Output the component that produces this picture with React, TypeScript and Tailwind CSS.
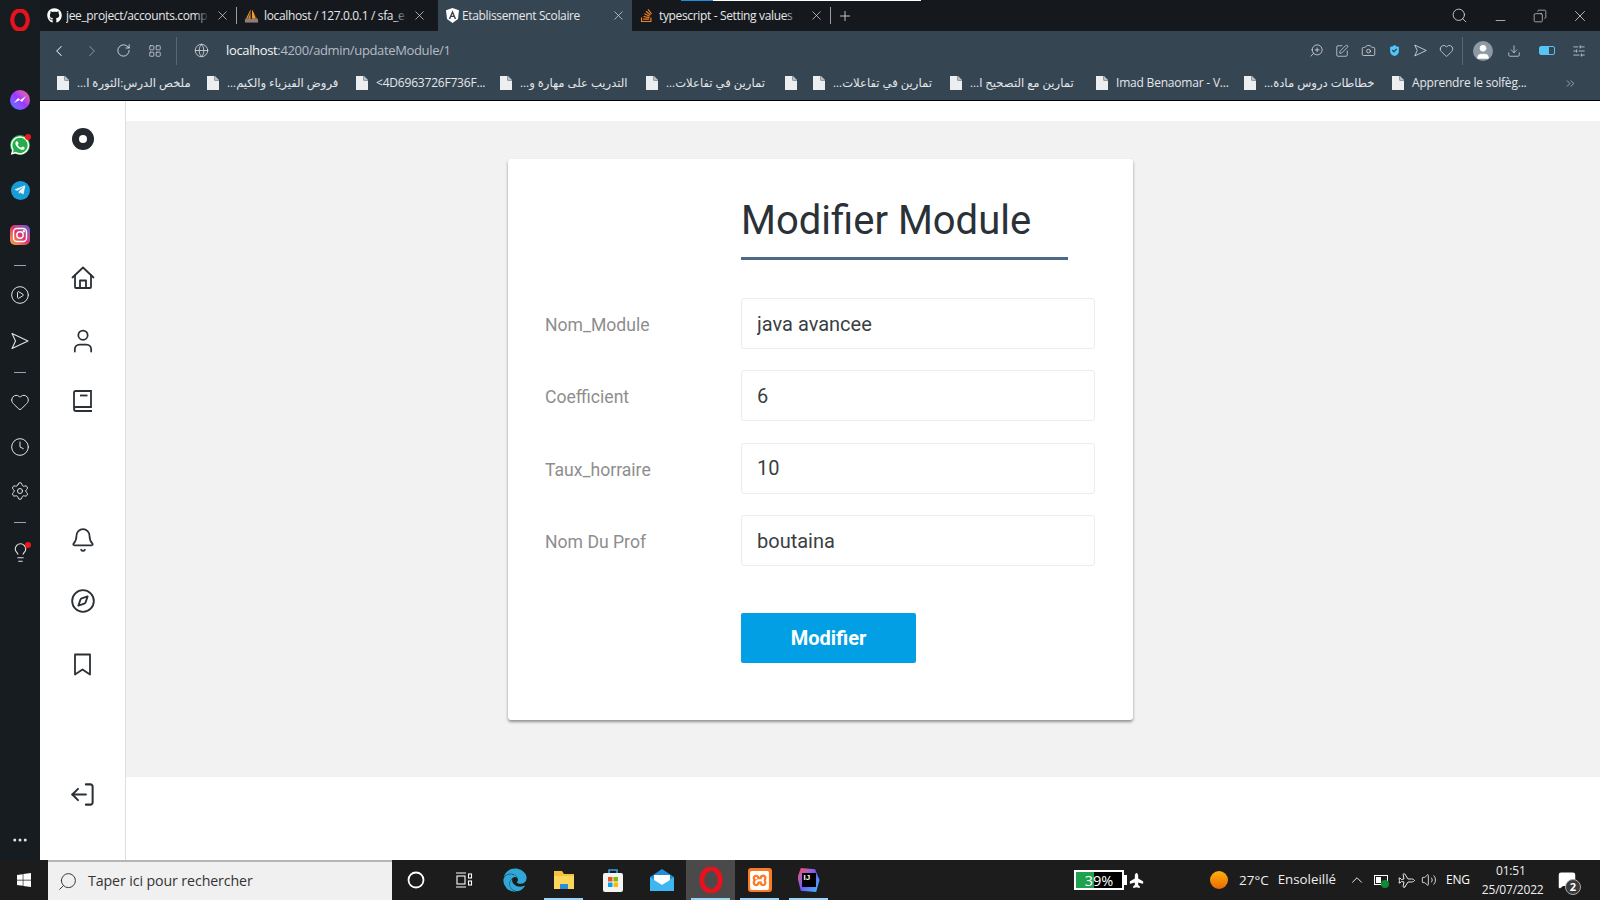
import React from "react";
import { ChevronLeft, ChevronRight, RotateCw, LayoutGrid, Globe, ZoomIn, SquarePen, Camera, Heart, Download, SlidersHorizontal, Search, Minus, X, Plus, ChevronsRight, Copy, CirclePlay, Clock, Settings, Lightbulb, Ellipsis, User, Bell, Compass, LogOut, ChevronUp, Plane, Volume2, MessageSquare, ShieldCheck, Circle } from "lucide-react";
import { FaGithub, FaStackOverflow, FaWhatsapp, FaTelegramPlane, FaWindows, FaPlane, FaEdge } from "react-icons/fa";
import { SiXampp } from "react-icons/si";

const ui = "font-['Open_Sans','Noto_Sans','DejaVu_Sans',sans-serif]";

function Tab({ w, icon, text, textW, active, sep, ml, mr }: { w: string; icon: React.ReactNode; text: string; textW: string; active?: boolean; sep?: boolean; ml: string; mr: string }) {
  return (
    <div className={`${w} h-full flex items-center pl-[7px] shrink-0 relative ${active ? "bg-[#364552]" : ""}`}>
      <span className="w-[15px] flex justify-center shrink-0">{icon}</span>
      <span className={`${textW} ${ml} overflow-hidden whitespace-nowrap text-[12px] tracking-[-0.35px] text-[#e6e8ea] relative`}>
        {text}
        {!active && <span className="absolute right-0 top-0 bottom-0 w-[14px] bg-gradient-to-r from-transparent to-[#15191d]" />}
      </span>
      <X size={15} strokeWidth={1.1} className={`ml-auto ${mr} text-[#e2e5e7]`} />
      {sep && <span className="absolute right-0 top-[7px] h-[17px] w-px bg-[#9aa0a5]" />}
    </div>
  );
}

function Bm({ w, text, rtl }: { w: string; text?: string; rtl?: boolean }) {
  return (
    <div className={`${w} shrink-0 flex items-center h-full`}>
      <svg width="12" height="14" viewBox="0 0 12 14" className="shrink-0"><path d="M0 0h7.5L12 4.5V14H0z" fill="#eceef0" /><path d="M7.5 0v4.5H12z" fill="#364552" /><path d="M8 0l4 4H8z" fill="#b9bfc5" /></svg>
      {text && <span dir={rtl ? "rtl" : "ltr"} className={`ml-[8px] whitespace-nowrap text-[#e4e7ea] ${rtl ? "text-[11.6px]" : "text-[12px] tracking-[-0.2px]"}`}>{text}</span>}
    </div>
  );
}

function SideItem({ children, h }: { children: React.ReactNode; h: string }) {
  return <div className={`${h} w-full flex items-center justify-center shrink-0 relative`}>{children}</div>;
}
const Dash = () => <div className="w-[12px] h-px bg-[#9aa4ab]" />;
const Dot = () => <span className="absolute left-[25px] top-[11px] w-[6px] h-[6px] rounded-full bg-[#f01818]" />;

function OperaLogo({ s }: { s: number }) {
  return (
    <svg width={s} height={s} viewBox="0 0 24 24">
      <ellipse cx="12" cy="12" rx="8.5" ry="10.5" fill="none" stroke="#e8121f" strokeWidth="4.6" />
    </svg>
  );
}

function SendOutline({ s, c }: { s: number; c?: string }) {
  return (
    <svg width={s} height={s} viewBox="0 0 18 18" fill="none" stroke="currentColor" strokeWidth="1.1" strokeLinejoin="round" className={c}>
      <path d="M1 1.5L17 9 1 16.5 4.5 9z" />
    </svg>
  );
}

function Field({ label, value }: { label: string; value: string }) {
  return (
    <div className="flex items-center h-[51px] mb-[21.4px]">
      <label className="w-[196px] text-[17.6px] text-[#8e8e8e] pt-[3px]">{label}</label>
      <input readOnly value={value} className="w-[354px] h-full px-[15px] border border-[#ececec] rounded-[3px] bg-white text-[20px] text-[#3a3f44] outline-none font-['Roboto',sans-serif]" />
    </div>
  );
}

function Nav({ h, children }: { h: string; children: React.ReactNode }) {
  return <div className={`${h} flex items-center justify-center shrink-0 text-[#2b3036]`}>{children}</div>;
}

export default function App() {
  return (
    <div className={`w-[1600px] h-[900px] flex flex-col overflow-hidden bg-white ${ui}`}>
      <div className="flex h-[860px]">
        {/* Opera sidebar */}
        <aside className="w-[40px] bg-[#171c20] flex flex-col items-center shrink-0 text-[#dfe3e6]">
          <SideItem h="h-[40px]"><OperaLogo s={22} /></SideItem>
          <div className="h-[37px] shrink-0" />
          <SideItem h="h-[46px]">
            <span className="w-[20px] h-[20px] rounded-full bg-gradient-to-tr from-[#2a7bff] via-[#a033ff] to-[#ff5c87] flex items-center justify-center">
              <svg width="12" height="10" viewBox="0 0 12 10"><path d="M0 8l4-5 2.5 2L12 1 8 7 5.5 5z" fill="#fff" /></svg>
            </span>
          </SideItem>
          <SideItem h="h-[44px]">
            <span className="w-[20px] h-[20px] rounded-full bg-[#25ad4b] flex items-center justify-center"><FaWhatsapp size={21} className="text-white" /></span><Dot />
          </SideItem>
          <SideItem h="h-[46px]">
            <span className="w-[19px] h-[19px] rounded-full bg-[#179cd8] flex items-center justify-center"><FaTelegramPlane size={12} className="text-[#e8f2f8] -ml-[1px]" /></span>
          </SideItem>
          <SideItem h="h-[44px]">
            <span className="w-[20px] h-[20px] rounded-[5px] bg-gradient-to-tr from-[#f9a825] via-[#e1306c] to-[#5b4fd6] flex items-center justify-center">
              <svg width="16" height="16" viewBox="0 0 16 16" fill="none" stroke="#fff" strokeWidth="1.4"><rect x="1.5" y="1.5" width="13" height="13" rx="3.5" /><circle cx="8" cy="8" r="3.2" /><circle cx="11.8" cy="4.2" r="0.5" fill="#fff" /></svg>
            </span>
          </SideItem>
          <SideItem h="h-[16px]"><Dash /></SideItem>
          <SideItem h="h-[44px]"><CirclePlay size={20} strokeWidth={1.2} /></SideItem>
          <SideItem h="h-[48px]"><SendOutline s={18} /></SideItem>
          <SideItem h="h-[14px]"><Dash /></SideItem>
          <SideItem h="h-[45px]"><Heart size={20} strokeWidth={1.2} /></SideItem>
          <SideItem h="h-[45px]"><Clock size={20} strokeWidth={1.2} /></SideItem>
          <SideItem h="h-[44px]"><Settings size={20} strokeWidth={1.2} /></SideItem>
          <SideItem h="h-[18px]"><Dash /></SideItem>
          <SideItem h="h-[42px]"><Lightbulb size={21} strokeWidth={1.3} /><Dot /></SideItem>
          <div className="flex-1" />
          <SideItem h="h-[40px]"><Ellipsis size={18} /></SideItem>
        </aside>

        <div className="flex-1 flex flex-col min-w-0">
          {/* Tab strip */}
          <div className="h-[31px] bg-[#15191d] flex items-center relative shrink-0">
            <span className="absolute left-[641px] top-0 w-[32px] h-px bg-[#1d8be0]" />
            <span className="absolute left-[673px] top-0 w-[208px] h-px bg-white" />
            <Tab w="w-[197px]" sep ml="ml-[4px]" mr="mr-[7px]" icon={<FaGithub size={15} className="text-white" />} text="jee_project/accounts.comp" textW="w-[143px]" />
            <Tab w="w-[201px]" ml="ml-[5px]" mr="mr-[11px]" icon={<svg width="16" height="16" viewBox="0 0 16 16"><path d="M2 11L7 1v10zM8.5 1L14 11H8.5z" fill="#f0962a" /><path d="M4 11L7 4M11 4l2 7" stroke="#15191d" strokeWidth="0.7" /><rect x="1" y="11" width="14" height="4" fill="#8c7d7a" /></svg>} text="localhost / 127.0.0.1 / sfa_e" textW="w-[144px]" />
            <Tab w="w-[194px]" active ml="ml-[2px]" mr="mr-[6px]" icon={<svg width="13" height="15" viewBox="0 0 13 15"><path d="M6.5 0L13 2.3 12 11l-5.5 4L1 11 0 2.3z" fill="#fff" /><path d="M6.5 2.2L2.8 11h1.5l.8-2h2.8l.8 2h1.5zM5.7 7.8l.8-2 .8 2z" fill="#364552" /></svg>} text="Etablissement Scolaire" textW="w-[150px]" />
            <Tab w="w-[199px]" sep ml="ml-[5px]" mr="mr-[7px]" icon={<FaStackOverflow size={15} className="text-[#f48024]" />} text="typescript - Setting values" textW="w-[140px]" />
            <Plus size={16} strokeWidth={1.2} className="ml-[6px] text-[#e6e8ea]" />
            <Search size={17} strokeWidth={1.1} className="ml-auto text-[#e8ebed] mr-[25px]" />
            <Minus size={15} strokeWidth={1.1} className="text-[#e8ebed] mr-[25px] mt-[10px]" />
            <Copy size={14} strokeWidth={1.1} className="text-[#e8ebed] mr-[24px] scale-x-[-1]" />
            <X size={18} strokeWidth={1} className="text-[#e8ebed] mr-[11px]" />
          </div>
          {/* Toolbar */}
          <div className="h-[37px] bg-[#364552] flex items-center text-[#e2e6ea] shrink-0 pl-[10px] pt-[2px]">
            <ChevronLeft size={18} strokeWidth={1.4} />
            <ChevronRight size={18} strokeWidth={1.4} className="ml-[15px] text-[#7f8b95]" />
            <RotateCw size={15} strokeWidth={1.4} className="ml-[15px]" />
            <LayoutGrid size={14} strokeWidth={1.2} className="ml-[17px]" />
            <span className="w-px h-[28px] bg-[#5b6873] ml-[14px]" />
            <Globe size={15} strokeWidth={1.2} className="ml-[17px]" />
            <span className="ml-[17px] text-[13px] tracking-[-0.35px] text-[#b4bcc4]"><span className="text-[#f4f5f6]">localhost</span>:4200/admin/updateModule/1</span>
            <div className="ml-auto flex items-center">
              <ZoomIn size={15} strokeWidth={1.2} className="scale-x-[-1] mr-[11px]" />
              <SquarePen size={14} strokeWidth={1.2} className="mr-[12px]" />
              <Camera size={15} strokeWidth={1.2} className="mr-[11px]" />
              <ShieldCheck size={15} strokeWidth={2} fill="#56c4f5" className="text-[#2b4a5f] mr-[12px]" />
              <SendOutline s={13} c="mr-[12px]" />
              <Heart size={15} strokeWidth={1.2} className="mr-[8px]" />
              <span className="w-px h-[28px] bg-[#5b6873] mr-[10px]" />
              <span className="w-[20px] h-[20px] rounded-full bg-[#8d99a3] flex items-center justify-center mr-[14px] overflow-hidden"><User size={18} fill="#fff" className="text-white mt-[3px]" strokeWidth={1} /></span>
              <Download size={14} strokeWidth={1.2} className="mr-[18px]" />
              <span className="w-[16px] h-[9px] rounded-[2px] border border-[#56c4f5] flex mr-[17px]"><span className="w-[9px] bg-[#56c4f5]" /></span>
              <SlidersHorizontal size={14} strokeWidth={1.2} className="mr-[14px]" />
            </div>
          </div>
          {/* Bookmarks */}
          <div className="h-[32px] bg-[#364552] flex items-center pl-[17px] pb-[2px] shrink-0">
            <Bm w="w-[150px]" text="ملخص الدرس:الثورة ا..." rtl />
            <Bm w="w-[149px]" text="فروض الفيزياء والكيم..." rtl />
            <Bm w="w-[144px]" text="<4D6963726F736F..." />
            <Bm w="w-[146px]" text="التدريب على مهارة و..." rtl />
            <Bm w="w-[139px]" text="تمارين في تفاعلات..." rtl />
            <Bm w="w-[28px]" />
            <Bm w="w-[137px]" text="تمارين في تفاعلات..." rtl />
            <Bm w="w-[146px]" text="تمارين مع التصحيح ا..." rtl />
            <Bm w="w-[148px]" text="Imad Benaomar - V..." />
            <Bm w="w-[148px]" text="خطاطات دروس مادة..." rtl />
            <Bm w="w-[164px]" text="Apprendre le solfèg..." />
            <ChevronsRight size={13} strokeWidth={1.2} className="text-[#d5dadf] ml-[8px]" />
          </div>
          {/* Page */}
          <div className="flex-1 flex border-t border-black min-h-0">
            <nav className="w-[86px] bg-white border-r border-[#dedede] flex flex-col items-center shrink-0">
              <div className="h-[38px] mt-[19px] w-[22px] flex items-center justify-center shrink-0">
                <span className="w-[22px] h-[22px] rounded-full bg-[#23282e] flex items-center justify-center"><span className="w-[8px] h-[8px] rounded-full bg-white" /></span>
              </div>
              <div className="h-[89px] shrink-0" />
              <Nav h="h-[62px]">
                <svg width="24" height="24" viewBox="0 0 24 24" fill="none" stroke="currentColor" strokeWidth="1.8" strokeLinejoin="round" strokeLinecap="round">
                  <path d="M1.5 11.5L12 1.5l10.5 10" />
                  <path d="M4 9.5V21a1 1 0 0 0 1 1h14a1 1 0 0 0 1-1V9.5" />
                  <path d="M9 22v-7.5h6V22" />
                </svg>
              </Nav>
              <Nav h="h-[64px]"><User size={28} strokeWidth={1.5} /></Nav>
              <Nav h="h-[56px]">
                <svg width="24" height="24" viewBox="0 0 24 24" fill="none" stroke="currentColor" strokeWidth="1.8">
                  <path d="M3 19V3.5A1.5 1.5 0 0 1 4.5 2h15.5v16H5a2 2 0 0 0-2 2 2 2 0 0 0 2 2h16" />
                  <path d="M9 6.5h7.5" />
                </svg>
              </Nav>
              <div className="h-[80px] shrink-0" />
              <Nav h="h-[62px]"><Bell size={26} strokeWidth={1.6} /></Nav>
              <Nav h="h-[60px]"><Compass size={26} strokeWidth={1.7} /></Nav>
              <Nav h="h-[66px]">
                <svg width="19" height="23" viewBox="0 0 19 23" fill="none" stroke="currentColor" strokeWidth="1.8" strokeLinejoin="round"><path d="M2 1.5h15v20l-7.5-5-7.5 5z" /></svg>
              </Nav>
              <div className="h-[67px] shrink-0" />
              <Nav h="h-[60px]"><LogOut size={27} strokeWidth={1.8} className="scale-x-[-1]" /></Nav>
            </nav>
            <div className="flex-1 flex flex-col font-['Roboto',sans-serif]">
              <div className="h-[20px] bg-white shrink-0" />
              <main className="h-[656px] bg-[#f2f2f2] shrink-0 pt-[38px] pl-[382px]">
                <div className="w-[625px] h-[561px] bg-white rounded-[3px] shadow-[0_2px_3px_rgba(0,0,0,0.4)] pl-[37px]">
                  <div className="ml-[196px] w-[327px] h-[101px] border-b-[3px] border-[#4e6887] flex items-start">
                    <h1 className="mt-[32px] text-[40px] leading-[60px] text-[#2a3137]">Modifier Module</h1>
                  </div>
                  <div className="h-[38px]" />
                  <Field label="Nom_Module" value="java avancee" />
                  <Field label="Coefficient" value="6" />
                  <Field label="Taux_horraire" value="10" />
                  <Field label="Nom Du Prof" value="boutaina" />
                  <button className="ml-[196px] mt-[25px] w-[175px] h-[50px] rounded-[2px] bg-[#029fe5] text-white text-[20px] font-bold">Modifier</button>
                </div>
              </main>
              <div className="flex-1 bg-white" />
            </div>
          </div>
        </div>
      </div>

      {/* Taskbar */}
      <footer className="h-[40px] bg-[#1c1c1c] flex items-center text-white shrink-0">
        <div className="w-[48px] flex justify-center"><FaWindows size={16} /></div>
        <div className="w-[344px] h-full bg-[#f0f0f0] border-t-2 border-[#b5b5b5] flex items-center pl-[9px] text-[#333]">
          <Search size={21} strokeWidth={1.1} className="scale-x-[-1]" />
          <span className="ml-[10px] text-[14.2px] tracking-[-0.1px]">Taper ici pour rechercher</span>
        </div>
        <div className="w-[48px] flex justify-center"><Circle size={18} strokeWidth={2.4} /></div>
        <div className="w-[48px] flex justify-center">
          <svg width="18" height="16" viewBox="0 0 18 16" fill="none" stroke="#fff" strokeWidth="1.1"><path d="M1 1h10M1 15h10" /><rect x="2" y="4" width="8" height="8" /><rect x="13.5" y="2" width="3" height="4" /><rect x="13.5" y="9" width="3" height="4" /></svg>
        </div>
        <div className="w-[51px] h-full flex items-center justify-center pl-[2px]"><FaEdge size={24} className="text-[#2fa8d8]" /></div>
        <TaskIcon on>
          <svg width="24" height="24" viewBox="0 0 24 24"><path d="M2 3h8l2 3h10v15H2z" fill="#f5c33b" /><rect x="2" y="8" width="20" height="13" fill="#fbd75b" /><path d="M8 21v-5h8v5z" fill="#2b8fd8" /></svg>
        </TaskIcon>
        <TaskIcon>
          <svg width="24" height="26" viewBox="0 0 24 26"><path d="M8 6V3h8v3" fill="none" stroke="#3aa0e0" strokeWidth="1.6" /><rect x="2" y="6" width="20" height="19" rx="2" fill="#f3f3f3" /><rect x="7" y="10" width="4.5" height="4.5" fill="#f25022" /><rect x="12.5" y="10" width="4.5" height="4.5" fill="#7fba00" /><rect x="7" y="15.5" width="4.5" height="4.5" fill="#00a4ef" /><rect x="12.5" y="15.5" width="4.5" height="4.5" fill="#ffb900" /></svg>
        </TaskIcon>
        <TaskIcon>
          <svg width="26" height="24" viewBox="0 0 26 24"><path d="M1 9L13 1l12 8v14H1z" fill="#1f8fdc" /><path d="M1 9l12 8 12-8v14H1z" fill="#3db6f2" /><path d="M5 7h16v5l-8 5-8-5z" fill="#fff" /></svg>
        </TaskIcon>
        <TaskIcon on active><OperaLogo s={26} /></TaskIcon>
        <TaskIcon on>
          <span className="w-[24px] h-[24px] rounded-[3px] bg-[#fb7a24] flex items-center justify-center"><SiXampp size={19} className="text-white" /></span>
        </TaskIcon>
        <TaskIcon on>
          <span className="w-[22px] h-[24px] bg-gradient-to-br from-[#fe315d] via-[#6b57ff] to-[#07c3f2] flex items-center justify-center [clip-path:polygon(15%_0,80%_5%,100%_50%,85%_100%,15%_95%,0_40%)]">
            <span className="w-[14px] h-[14px] bg-black text-[8px] leading-[10px] font-bold text-white pl-[2px] font-['Liberation_Sans',sans-serif]">IJ</span>
          </span>
        </TaskIcon>
        <div className="ml-[241px] relative flex items-center h-[20px] w-[50px] border-2 border-white bg-black text-[14.5px]">
          <span className="w-[18px] h-full bg-[#1fa24e]" />
          <span className="absolute inset-0 text-center leading-[17px]">39%</span>
          <span className="absolute left-[48px] top-[3px] w-[3px] h-[10px] bg-white" />
        </div>
        <FaPlane size={15} className="ml-[5px] -rotate-90" />
        <span className="ml-[66px] w-[18px] h-[18px] rounded-full bg-gradient-to-b from-[#ffb010] to-[#e86a00]" />
        <span className="ml-[11px] text-[13.5px] text-[#eeeeee]">27°C</span>
        <span className="ml-[9px] text-[13.3px] text-[#eeeeee]">Ensoleillé</span>
        <ChevronUp size={18} strokeWidth={1.2} className="ml-[12px]" />
        <span className="ml-[8px] w-[14px] h-[10px] border border-white relative"><span className="absolute left-[1px] top-[1px] w-[5px] h-[6px] bg-white" /><span className="absolute right-[-2px] bottom-[-4px] w-[8px] h-[8px] rounded-full bg-[#0f8a3a]" /></span>
        <Plane size={17} strokeWidth={1.2} className="ml-[9px] rotate-45" />
        <Volume2 size={16} strokeWidth={1.2} className="ml-[7px]" />
        <span className="ml-[9px] text-[12px] tracking-[-0.2px]">ENG</span>
        <div className="ml-[12px] w-[58px] text-center text-[12px] tracking-[-0.2px] leading-[19px] text-[#eeeeee]"><div>01:51</div><div>25/07/2022</div></div>
        <div className="ml-[18px] relative">
          <MessageSquare size={18} fill="#fff" className="text-white" />
          <span className="absolute left-[7px] top-[8px] w-[16px] h-[16px] rounded-full bg-[#3a3a3a] border border-[#aaa] text-[11px] font-bold leading-[14px] text-center">2</span>
        </div>
      </footer>
    </div>
  );
}

function TaskIcon({ children, on, active }: { children: React.ReactNode; on?: boolean; active?: boolean }) {
  return (
    <div className={`w-[49px] h-full flex items-center justify-center relative ${active ? "bg-[#4a4a4a]" : ""}`}>
      {children}
      {on && <span className="absolute left-[5px] right-[5px] bottom-0 h-[2px] bg-[#9fd4f5]" />}
    </div>
  );
}
